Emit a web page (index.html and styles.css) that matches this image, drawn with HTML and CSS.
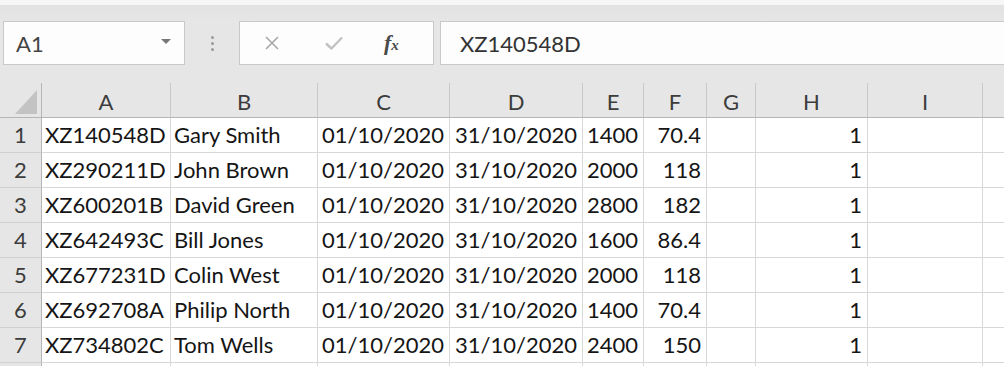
FILE: index.html
```html
<!DOCTYPE html>
<html>
<head>
<meta charset="utf-8">
<link rel="stylesheet" href="styles.css">
</head>
<body>
<div class="app">
  <div class="top-strip"></div>
  <div class="formula-row">
    <div class="name-box"><span class="name-text">A1</span><span class="dd"></span></div>
    <div class="grip"><span></span><span></span><span></span></div>
    <div class="fx-box">
      <svg class="ico-x" width="16" height="16" viewBox="0 0 16 16"><path d="M2 2 L14 14 M14 2 L2 14" stroke="#a8a8a8" stroke-width="1.6" fill="none"/></svg>
      <svg class="ico-check" width="20" height="16" viewBox="0 0 20 16"><path d="M2 8.5 L7.5 13.5 L18 2.5" stroke="#c2c2c2" stroke-width="2.4" fill="none" stroke-linejoin="round"/></svg>
      <span class="fx"><span class="fx-f">f</span><span class="fx-x">x</span></span>
    </div>
    <div class="formula-input">XZ140548D</div>
  </div>
  <div class="sheet">
    <div class="corner"><span class="tri"></span></div>
    <div class="colh">A</div><div class="colh">B</div><div class="colh">C</div><div class="colh">D</div><div class="colh">E</div><div class="colh">F</div><div class="colh">G</div><div class="colh">H</div><div class="colh">I</div><div class="colh last"></div>

    <div class="rowh">1</div><div class="c">XZ140548D</div><div class="c">Gary Smith</div><div class="c r">01/10/2020</div><div class="c r">31/10/2020</div><div class="c r">1400</div><div class="c r">70.4</div><div class="c"></div><div class="c r">1</div><div class="c"></div><div class="c last"></div>
    <div class="rowh">2</div><div class="c">XZ290211D</div><div class="c">John Brown</div><div class="c r">01/10/2020</div><div class="c r">31/10/2020</div><div class="c r">2000</div><div class="c r">118</div><div class="c"></div><div class="c r">1</div><div class="c"></div><div class="c last"></div>
    <div class="rowh">3</div><div class="c">XZ600201B</div><div class="c">David Green</div><div class="c r">01/10/2020</div><div class="c r">31/10/2020</div><div class="c r">2800</div><div class="c r">182</div><div class="c"></div><div class="c r">1</div><div class="c"></div><div class="c last"></div>
    <div class="rowh">4</div><div class="c">XZ642493C</div><div class="c">Bill Jones</div><div class="c r">01/10/2020</div><div class="c r">31/10/2020</div><div class="c r">1600</div><div class="c r">86.4</div><div class="c"></div><div class="c r">1</div><div class="c"></div><div class="c last"></div>
    <div class="rowh">5</div><div class="c">XZ677231D</div><div class="c">Colin West</div><div class="c r">01/10/2020</div><div class="c r">31/10/2020</div><div class="c r">2000</div><div class="c r">118</div><div class="c"></div><div class="c r">1</div><div class="c"></div><div class="c last"></div>
    <div class="rowh">6</div><div class="c">XZ692708A</div><div class="c">Philip North</div><div class="c r">01/10/2020</div><div class="c r">31/10/2020</div><div class="c r">1400</div><div class="c r">70.4</div><div class="c"></div><div class="c r">1</div><div class="c"></div><div class="c last"></div>
    <div class="rowh">7</div><div class="c">XZ734802C</div><div class="c">Tom Wells</div><div class="c r">01/10/2020</div><div class="c r">31/10/2020</div><div class="c r">2400</div><div class="c r">150</div><div class="c"></div><div class="c r">1</div><div class="c"></div><div class="c last"></div>
    <div class="rowh"></div><div class="c"></div><div class="c"></div><div class="c"></div><div class="c"></div><div class="c"></div><div class="c"></div><div class="c"></div><div class="c"></div><div class="c"></div><div class="c last"></div>
  </div>
</div>
</body>
</html>
```

FILE: styles.css
```css
* { box-sizing: border-box; }
html, body { margin: 0; padding: 0; }
body {
  width: 1004px;
  height: 366px;
  overflow: hidden;
  background: #e6e6e6;
  font-family: Lato, "Open Sans", sans-serif;
}
.app { width: 1004px; height: 366px; overflow: hidden; }
.top-strip { height: 5px; background: #f6f6f6; }
.formula-row {
  display: flex;
  align-items: flex-start;
  height: 78px;
  padding: 16px 0 0 3px;
  background: linear-gradient(#e2e2e2, #e6e6e6 16px, #e6e6e6);
}
.name-box {
  width: 182px;
  height: 44px;
  background: #fdfdfd;
  border: 1px solid #c9c9c9;
  display: flex;
  align-items: center;
  justify-content: space-between;
  padding: 0 13px 0 12px;
}
.name-text { font-size: 22px; color: #444; }
.dd {
  width: 0; height: 0;
  border-left: 5px solid transparent;
  border-right: 5px solid transparent;
  border-top: 5px solid #777;
  margin-top: -3px;
}
.grip {
  width: 54px;
  height: 44px;
  display: flex;
  flex-direction: column;
  align-items: center;
  justify-content: center;
  gap: 3px;
}
.grip span { width: 3px; height: 3px; background: #9a9a9a; border-radius: 50%; }
.fx-box {
  width: 195px;
  height: 44px;
  background: #fdfdfd;
  border: 1px solid #c9c9c9;
  display: flex;
  align-items: center;
  padding: 0 0 0 24px;
}
.ico-x { margin-right: 44px; }
.ico-check { margin-right: 40px; }
.fx { font-family: "Liberation Serif", serif; font-style: italic; color: #4a4a4a; font-weight: bold; }
.fx-f { font-size: 22px; }
.fx-x { font-size: 15px; }
.formula-input {
  flex: 1;
  margin-left: 6px;
  height: 44px;
  background: #fdfdfd;
  border: 1px solid #c9c9c9;
  border-right: none;
  display: flex;
  align-items: center;
  padding-left: 19px;
  font-size: 22px;
  color: #333;
}
.sheet {
  display: grid;
  grid-template-columns: 42px 129px 147px 132px 133px 61px 63px 49px 112px 115px 1fr;
  grid-template-rows: 35px repeat(8, 35px);
}
.corner, .colh, .rowh {
  background: #e6e6e6;
  color: #3c3c3c;
  font-size: 22px;
}
.corner {
  position: relative;
  border-right: 1px solid #b5b5b5;
  border-bottom: 1px solid #b5b5b5;
}
.tri {
  position: absolute;
  right: 4px;
  bottom: 3px;
  width: 0; height: 0;
  border-left: 22px solid transparent;
  border-bottom: 24px solid #c3c3c3;
}
.colh {
  display: flex;
  align-items: center;
  justify-content: center;
  border-right: 1px solid #c9c9c9;
  border-bottom: 1px solid #b5b5b5;
  padding-top: 2px;
}
.rowh {
  display: flex;
  align-items: flex-end;
  justify-content: center;
  padding-bottom: 4px;
  border-right: 1px solid #b5b5b5;
  border-bottom: 1px solid #d0d0d0;
}
.c {
  background: #fff;
  border-right: 1px solid #d8d8d8;
  border-bottom: 1px solid #d8d8d8;
  font-size: 22px;
  color: #151515;
  display: flex;
  align-items: flex-end;
  padding: 0 4px 4px 3px;
  white-space: nowrap;
  overflow: hidden;
}
.c.r { justify-content: flex-end; padding-right: 5px; }
.last { border-right: none; }
```
